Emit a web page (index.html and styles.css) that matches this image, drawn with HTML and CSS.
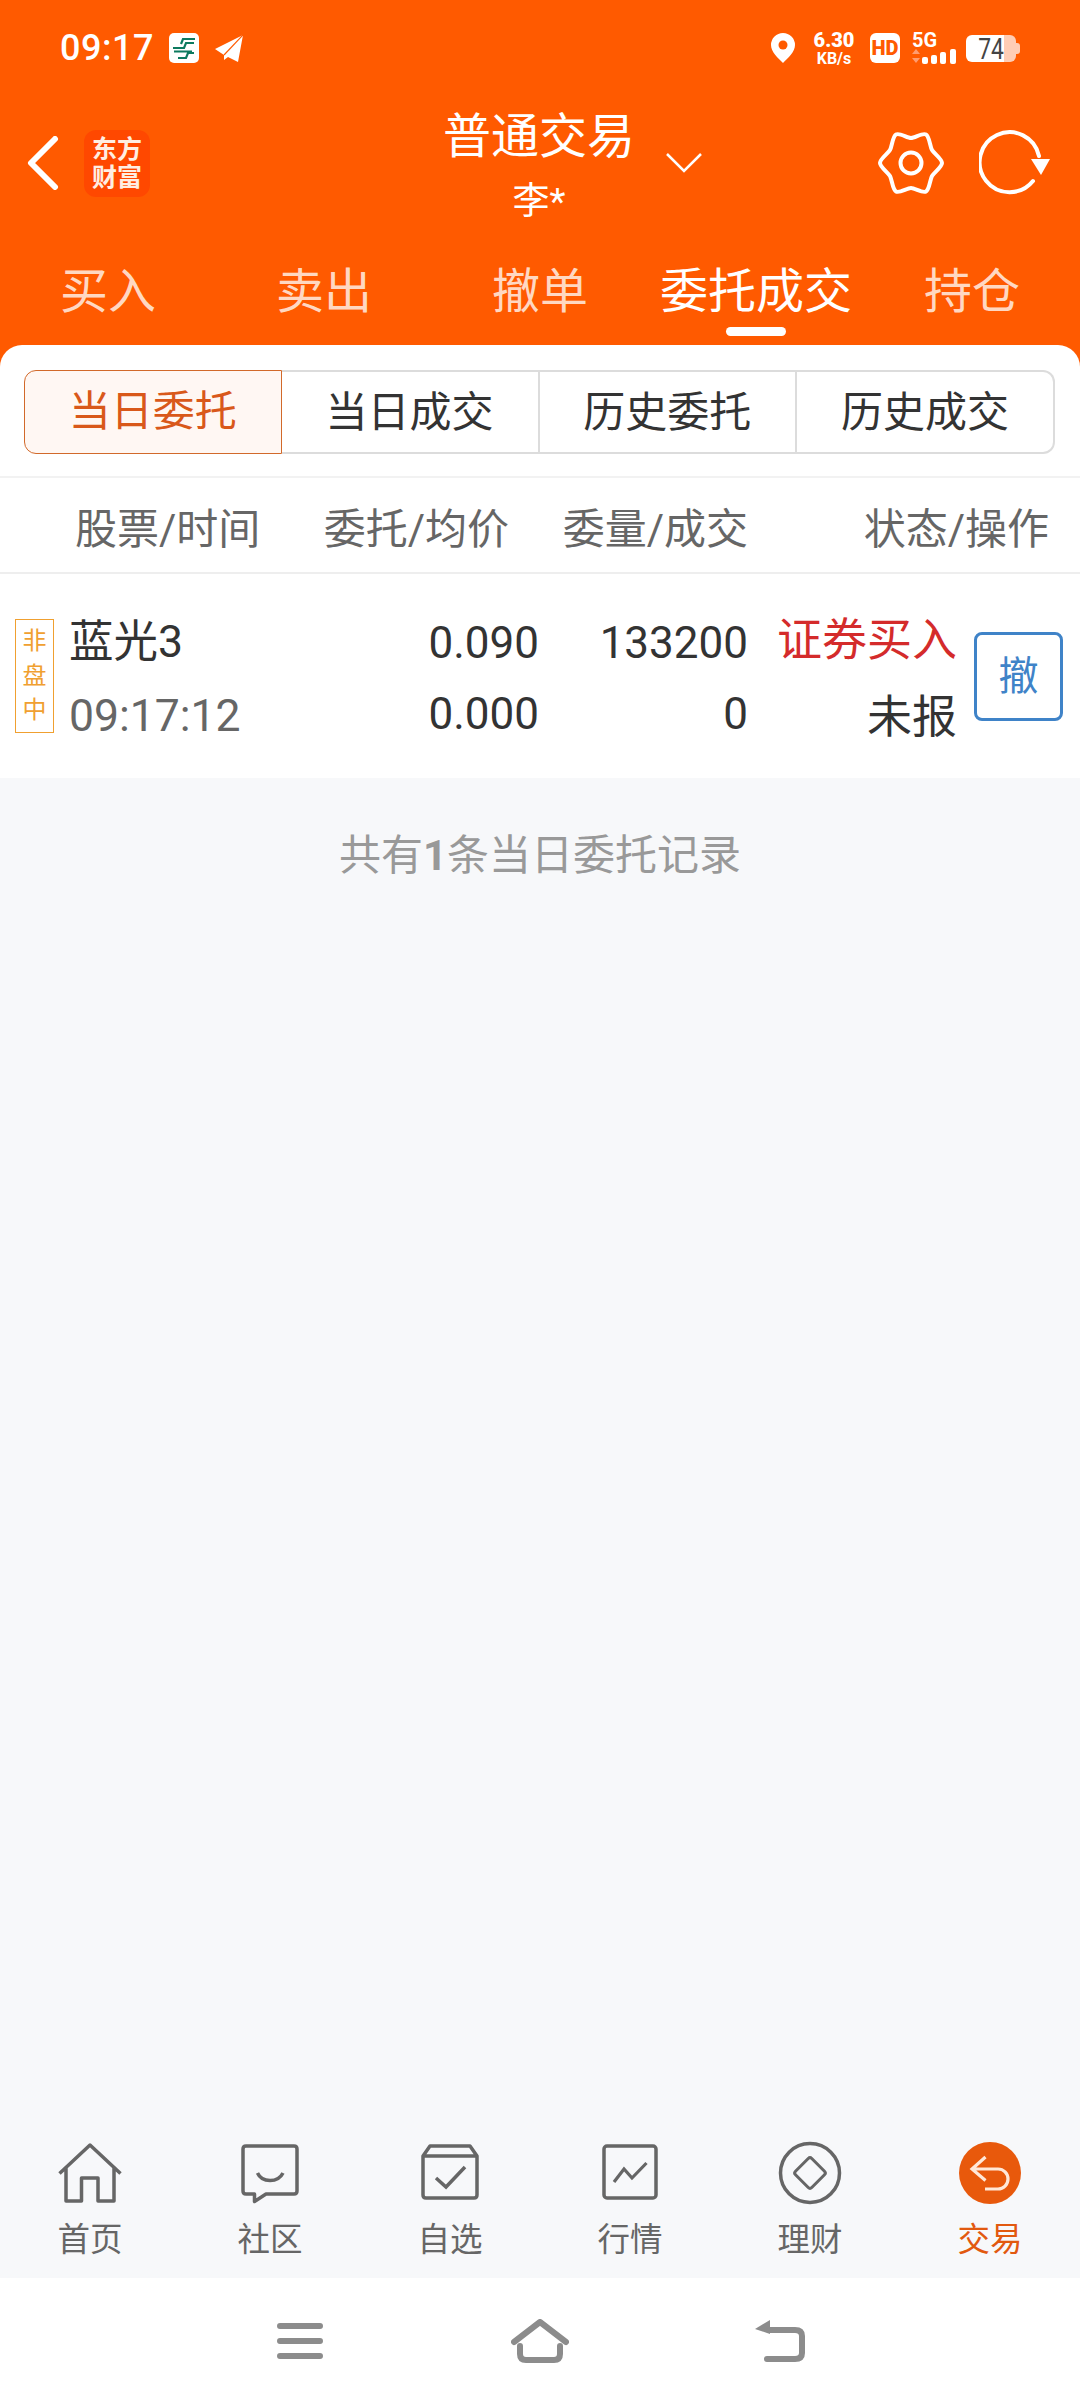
FILE: index.html
```html
<!DOCTYPE html>
<html lang="zh-CN">
<head>
  <meta charset="UTF-8" />
  <title>委托成交</title>
  <link rel="stylesheet" href="styles.css">
</head>
<body>
  <header class="top">
    <div class="status-bar">
      <span class="clock">09:17</span>
      <svg class="ic-post" viewBox="0 0 30 30">
        <rect width="30" height="30" rx="5" fill="#fff"/>
        <path d="M12 11 L14 6 H26 M4 15 H15 L17 10 H25 M5 18.500 H23 M9 25 H17 L19 20 H25" fill="none" stroke="#0d7a5f" stroke-width="2.200"/>
      </svg>
      <svg class="ic-plane" viewBox="0 0 28 27">
        <polygon points="28,0 0,14 9,20 9,25 13,22 23,27" fill="#fff"/>
        <path d="M28 0 L9 20" stroke="#ff5a00" stroke-width="1.200"/>
      </svg>
      <div class="status-right">
        <svg class="ic-pin" viewBox="0 0 24 30">
          <path d="M12 0 a12 12 0 0 1 12 12 c0 7 -7 13 -12 18 c-5 -5 -12 -11 -12 -18 a12 12 0 0 1 12 -12 z" fill="#fff"/>
          <circle cx="12" cy="12" r="4.500" fill="#ff5a00"/>
        </svg>
        <div class="speed"><b>6.30</b><span>KB/s</span></div>
        <div class="hd">HD</div>
        <div class="net">
          <span class="net-5g">5G</span>
          <svg class="ic-signal" viewBox="0 0 44 15">
            <path d="M4 0 L8 5 H0 Z M4 14 L8 9 H0 Z" fill="#ff9c70"/>
            <rect x="10" y="8" width="6" height="7" rx="2" fill="#fff"/>
            <rect x="19" y="6" width="6" height="9" rx="2" fill="#fff"/>
            <rect x="28" y="3" width="6" height="12" rx="2" fill="#fff"/>
            <rect x="38" y="0" width="6" height="15" rx="2" fill="#fff"/>
          </svg>
        </div>
        <div class="battery"><span>74</span></div>
      </div>
    </div>

    <div class="title-bar">
      <div class="title-left">
        <svg class="ic-back" viewBox="0 0 32 54">
          <path d="M28 3 L4 27 L28 51" fill="none" stroke="#fff" stroke-width="6" stroke-linecap="round" stroke-linejoin="round"/>
        </svg>
        <div class="logo">东方<br>财富</div>
      </div>
      <div class="title-text">
        <div class="title-main">普通交易</div>
        <div class="title-sub">李*</div>
      </div>
      <svg class="ic-down" viewBox="0 0 38 22">
        <path d="M2 2 L19 19 L36 2" fill="none" stroke="#fff" stroke-width="2.500"/>
      </svg>
      <div class="title-right">
        <svg class="ic-gear" viewBox="-34 -33 68 66">
          <path d="M31 0 C31 4 23 9.500 21 13 C19 16.500 18.500 26.500 15 28.500 C11.500 30.500 4 25 0 25 C-4 25 -11.500 30.500 -15 28.500 C-18.500 26.500 -19 16.500 -21 13 C-23 9.500 -31 4 -31 0 C-31 -4 -23 -9.500 -21 -13 C-19 -16.500 -18.500 -26.500 -15 -28.500 C-11.500 -30.500 -4 -25 0 -25 C4 -25 11.500 -30.500 15 -28.500 C18.500 -26.500 19 -16.500 21 -13 C23 -9.500 31 -4 31 0 Z" fill="none" stroke="#fff" stroke-width="4" stroke-linejoin="round"/>
          <circle r="10.500" fill="none" stroke="#fff" stroke-width="4"/>
        </svg>
        <svg class="ic-refresh" viewBox="0 0 71 66">
          <path d="M54 51 A30 30 0 1 1 60 26" fill="none" stroke="#fff" stroke-width="4" stroke-linecap="round"/>
          <polygon points="52,29 71,29 62,45" fill="#fff"/>
        </svg>
      </div>
    </div>

    <nav class="tabs">
      <div class="tab">买入</div>
      <div class="tab">卖出</div>
      <div class="tab">撤单</div>
      <div class="tab active">委托成交</div>
      <div class="tab">持仓</div>
    </nav>
  </header>

  <main class="content">
    <section class="panel">
      <div class="segments">
        <div class="seg on">当日委托</div>
        <div class="seg">当日成交</div>
        <div class="seg">历史委托</div>
        <div class="seg">历史成交</div>
      </div>

      <div class="list-head">
        <div class="h-name">股票/时间</div>
        <div>委托/均价</div>
        <div>委量/成交</div>
        <div>状态/操作</div>
      </div>

      <div class="order">
        <div class="tag">非<br>盘<br>中</div>
        <div class="o-name">
          <div>蓝光3</div>
          <div class="muted">09:17:12</div>
        </div>
        <div class="o-num">
          <div>0.090</div>
          <div>0.000</div>
        </div>
        <div class="o-num o-qty">
          <div>133200</div>
          <div>0</div>
        </div>
        <div class="o-state">
          <div class="red">证券买入</div>
          <div>未报</div>
        </div>
        <div class="cancel">撤</div>
      </div>
    </section>

    <p class="summary">共有<b>1</b>条当日委托记录</p>
  </main>

  <nav class="bottom-tabs">
    <div class="b-tab">
      <svg class="b-icon" viewBox="0 0 64 64">
        <path d="M1.500 32.500 L32 4 L62.500 32.500 M8 26 V60 H23.500 V37 H40 V60 H56 V26" fill="none" stroke="#666" stroke-width="3.500" stroke-linejoin="round"/>
      </svg>
      <span>首页</span>
    </div>
    <div class="b-tab">
      <svg class="b-icon" viewBox="0 0 64 64">
        <path d="M8 5 H56 Q59 5 59 8 V50 Q59 53 56 53 H28 L16.500 60.500 V53 H8 Q5 53 5 50 V8 Q5 5 8 5 Z" fill="none" stroke="#666" stroke-width="3.500" stroke-linejoin="round"/>
        <path d="M19.500 32 C24 42 40 42 45 32" fill="none" stroke="#666" stroke-width="3.500"/>
      </svg>
      <span>社区</span>
    </div>
    <div class="b-tab">
      <svg class="b-icon" viewBox="0 0 64 64">
        <path d="M5 15 L12 5 H52 L59 15 V54 Q59 57 56 57 H8 Q5 57 5 54 Z M5 15 H59" fill="none" stroke="#666" stroke-width="3.500" stroke-linejoin="round"/>
        <path d="M18 37 L28 46 L47 26" fill="none" stroke="#666" stroke-width="3.500"/>
      </svg>
      <span>自选</span>
    </div>
    <div class="b-tab">
      <svg class="b-icon" viewBox="0 0 64 64">
        <rect x="6" y="5" width="52" height="52" rx="3" fill="none" stroke="#666" stroke-width="3.500"/>
        <path d="M16 41 L26 28 L34 37 L48.500 22" fill="none" stroke="#666" stroke-width="3.200"/>
      </svg>
      <span>行情</span>
    </div>
    <div class="b-tab">
      <svg class="b-icon" viewBox="0 0 64 64">
        <circle cx="32" cy="32" r="29.500" fill="none" stroke="#666" stroke-width="3.500"/>
        <rect x="20.500" y="20.500" width="23" height="23" rx="2.500" transform="rotate(45 32 32)" fill="none" stroke="#666" stroke-width="3"/>
      </svg>
      <span>理财</span>
    </div>
    <div class="b-tab active">
      <svg class="b-icon" viewBox="0 0 64 64">
        <circle cx="32" cy="32" r="31" fill="#e8590c"/>
        <path d="M27.500 16 L14 28 L27.500 39.500 M14 28 H40 A10 10 0 0 1 40 48 H27" fill="none" stroke="#ffe8d8" stroke-width="3.200"/>
      </svg>
      <span>交易</span>
    </div>
  </nav>

  <div class="sys-nav">
    <div class="sys-cell">
      <svg class="sys-menu" viewBox="0 0 46 36">
        <path d="M3 3 H43 M3 18 H43 M3 33 H43" stroke="#8c8c8c" stroke-width="6" stroke-linecap="round"/>
      </svg>
    </div>
    <div class="sys-cell">
      <svg class="sys-home" viewBox="0 0 58 44">
        <path d="M3 23 L29 3 L55 23 M9 27 V35 Q9 41 15 41 H43 Q49 41 49 35 V27" fill="none" stroke="#8c8c8c" stroke-width="6" stroke-linecap="round" stroke-linejoin="round"/>
      </svg>
    </div>
    <div class="sys-cell">
      <svg class="sys-back" viewBox="0 0 50 42">
        <path d="M14 10 H40 Q47 10 47 16 V33 Q47 39 40 39 H12" fill="none" stroke="#8c8c8c" stroke-width="6" stroke-linecap="round"/>
        <path d="M0 9 L15 0 V14 Z" fill="#8c8c8c"/>
      </svg>
    </div>
  </div>
</body>
</html>
```

FILE: styles.css
```css
* { box-sizing: border-box; }
html, body { margin: 0; height: 100%; }
body {
  width: 1080px;
  height: 2404px;
  display: flex;
  flex-direction: column;
  overflow: hidden;
  background: #f7f8fa;
  color: #333;
  font-family: Roboto, "Noto Sans CJK SC", sans-serif;
}

/* orange header */
.top { background: #ff5a00; color: #fff; }

.status-bar { height: 96px; padding: 0 60px 0 60px; display: flex; align-items: center; }
.clock { font-size: 36px; font-weight: 500; letter-spacing: 0.5px; width: 109px; }
.ic-post { width: 30px; height: 30px; }
.ic-plane { width: 28px; height: 27px; margin-left: 16px; }
.status-right { margin-left: auto; display: flex; align-items: center; }
.ic-pin { width: 24px; height: 30px; }
.speed { width: 42px; margin-left: 18px; display: flex; flex-direction: column; align-items: center; font-weight: 700; }
.speed b { font-size: 20px; line-height: 20px; }
.speed span { font-size: 16px; line-height: 17px; }
.hd {
  width: 30px; height: 30px; margin-left: 15px;
  background: #fff; border-radius: 6px;
  color: #ff5a00; font-size: 20px; font-weight: 900; line-height: 30px; text-align: center;
}
.net { width: 44px; margin-left: 12px; }
.net-5g { display: block; font-size: 20px; font-weight: 700; line-height: 15px; margin-bottom: 1px; }
.ic-signal { display: block; width: 44px; height: 15px; }
.battery {
  position: relative;
  width: 50px; height: 27px; margin: 0 4px 0 10px;
  border-radius: 6px;
  background: linear-gradient(to right, #fff 76%, #ffcdb5 76%);
  color: #444; text-align: center;
}
.battery span { display: block; font-size: 30px; line-height: 27px; transform: scaleX(0.76); }
.battery::after {
  content: ""; position: absolute; right: -4px; top: 8px;
  width: 4px; height: 11px; background: #ffcdb5; border-radius: 0 3px 3px 0;
}

.title-bar { height: 134px; padding-left: 27px; display: flex; align-items: center; }
.title-left { width: 416px; display: flex; align-items: center; }
.ic-back { width: 32px; height: 54px; }
.logo {
  width: 66px; height: 67px; margin-left: 25px; padding-top: 6px;
  background: #ff4800; border-radius: 12px;
  font-size: 25px; font-weight: 700; line-height: 28px; text-align: center; color: #ffeee2;
}
.title-text { width: 192px; padding-top: 7px; text-align: center; }
.title-main { font-size: 48px; line-height: 56px; }
.title-sub { font-size: 37px; line-height: 44px; margin-top: 15px; }
.ic-down { width: 38px; height: 22px; margin-left: 30px; }
.title-right { margin-left: auto; padding-right: 30px; display: flex; align-items: center; }
.ic-gear { width: 68px; height: 66px; }
.ic-refresh { width: 71px; height: 66px; margin-left: 34px; }

.tabs { height: 115px; display: grid; grid-template-columns: repeat(5, 216px); padding-top: 32px; }
.tab { text-align: center; font-size: 48px; line-height: 60px; color: #ffd8c2; }
.tab.active { color: #fff; }
.tab.active::after {
  content: ""; display: block;
  width: 60px; height: 9px; margin: 5px auto 0;
  background: #fff; border-radius: 5px;
}

/* list */
.content { flex: 1; background: linear-gradient(#ff5a00 30px, transparent 30px); }
.panel { background: #fff; border-radius: 22px 22px 0 0; padding-top: 25px; height: 433px; }

.segments { display: flex; height: 84px; margin: 0 25px 22px 24px; }
.seg {
  width: 258px;
  border: 2px solid #dcdcdc; border-left-width: 0;
  font-size: 42px; line-height: 82px; text-align: center;
}
.seg:last-child { border-radius: 0 12px 12px 0; }
.seg.on {
  border: 1.500px solid #d2692a; border-radius: 12px 0 0 12px;
  background: #fff7f3; color: #d9581a;
}

.list-head {
  height: 98px;
  border-top: 2px solid #f2f2f2; border-bottom: 2px solid #eee;
  display: grid; grid-template-columns: 258px 251px 239px 301px;
  align-items: center;
  font-size: 42px; color: #666; text-align: right; white-space: nowrap;
}
.h-name { text-align: left; padding-left: 75px; }

.order { height: 204px; padding-left: 15px; display: flex; align-items: center; font-size: 45px; }
.tag {
  width: 39px; height: 114px; padding-top: 4px;
  border: 1.500px solid #f0a030;
  color: #f0a030; font-size: 24px; line-height: 34.500px; text-align: center;
}
.o-name { width: 200px; margin-left: 15px; padding-top: 6px; font-size: 44.500px; line-height: 74px; }
.muted { color: #666; }
.o-num { width: 270px; padding-top: 6px; font-size: 44px; text-align: right; line-height: 71px; }
.o-qty { width: 209px; }
.o-state { width: 209px; padding-top: 6px; text-align: right; line-height: 77px; }
.red { color: #d42b2b; }
.cancel {
  width: 89px; height: 89px; margin-left: 17px;
  border: 3px solid #3f83c8; border-radius: 8px;
  color: #3f83c8; font-size: 40px; line-height: 83px; text-align: center;
}

.summary { margin: 49px 0 0; text-align: center; font-size: 42px; line-height: 58px; color: #999; }

/* bottom tabs */
.bottom-tabs { height: 137px; display: grid; grid-template-columns: repeat(6, 180px); }
.b-tab { display: flex; flex-direction: column; align-items: center; font-size: 32.500px; line-height: 40px; color: #666; }
.b-tab.active { color: #e2590f; }
.b-icon { width: 64px; height: 64px; margin-bottom: 15px; }

.sys-nav { height: 126px; background: #fff; display: flex; justify-content: center; }
.sys-cell { width: 240px; display: flex; align-items: center; justify-content: center; }
.sys-menu { width: 46px; height: 36px; }
.sys-home { width: 58px; height: 44px; }
.sys-back { width: 50px; height: 42px; }
```
